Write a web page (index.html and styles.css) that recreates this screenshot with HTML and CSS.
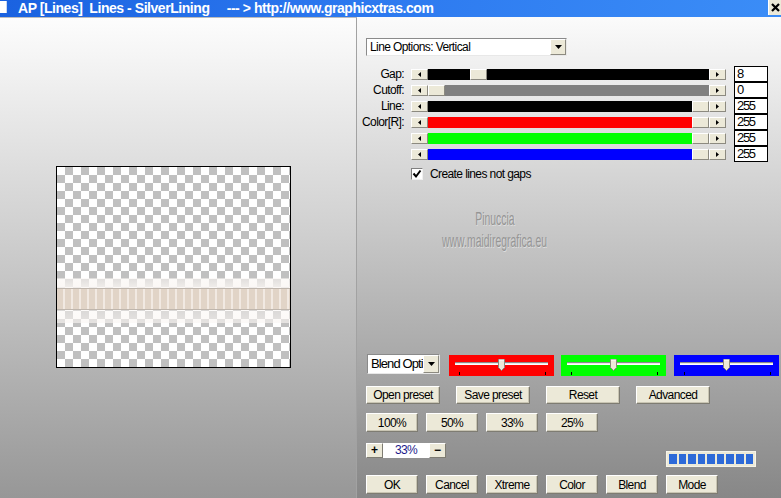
FILE: index.html
```html
<!DOCTYPE html>
<html>
<head>
<meta charset="utf-8">
<link rel="stylesheet" href="styles.css">
</head>
<body>
<div class="window">
  <div class="titlebar">
    <span class="app-icon"></span>
    <span class="title">AP [Lines]  Lines - SilverLining     --- &gt; http://www.graphicxtras.com</span>
    <span class="close"><svg width="9" height="9" viewBox="0 0 9 9"><path d="M1 1L8 8M8 1L1 8" stroke="#000" stroke-width="2.2"/></svg></span>
  </div>
  <div class="main">
    <div class="left">
      <div class="preview">
        <div class="band"><div class="band-top"></div><div class="stripes"></div><div class="band-bottom"></div></div>
      </div>
    </div>
    <div class="right">
      <div class="select select-wide">
        <span class="select-text">Line Options: Vertical</span>
        <span class="select-btn"><svg width="7" height="4" viewBox="0 0 7 4"><path d="M0 0H7L3.5 4Z" fill="#000"/></svg></span>
      </div>

      <div class="sliders">
        <span class="lbl">Gap:</span>
        <div class="scroll c-black">
          <span class="sbtn"><svg width="3" height="5" viewBox="0 0 3 5"><path d="M3 0V5L0 2.5Z" fill="#000"/></svg></span>
          <span class="track"><span class="fill" style="width:42px"></span><span class="thumb"></span><span class="rest"></span></span>
          <span class="sbtn"><svg width="3" height="5" viewBox="0 0 3 5"><path d="M0 0V5L3 2.5Z" fill="#000"/></svg></span>
        </div>
        <span class="val">8</span>

        <span class="lbl">Cutoff:</span>
        <div class="scroll c-gray">
          <span class="sbtn"><svg width="3" height="5" viewBox="0 0 3 5"><path d="M3 0V5L0 2.5Z" fill="#000"/></svg></span>
          <span class="track"><span class="fill" style="width:0px"></span><span class="thumb"></span><span class="rest"></span></span>
          <span class="sbtn"><svg width="3" height="5" viewBox="0 0 3 5"><path d="M0 0V5L3 2.5Z" fill="#000"/></svg></span>
        </div>
        <span class="val">0</span>

        <span class="lbl">Line:</span>
        <div class="scroll c-black">
          <span class="sbtn"><svg width="3" height="5" viewBox="0 0 3 5"><path d="M3 0V5L0 2.5Z" fill="#000"/></svg></span>
          <span class="track"><span class="fill" style="width:264px"></span><span class="thumb"></span><span class="rest"></span></span>
          <span class="sbtn"><svg width="3" height="5" viewBox="0 0 3 5"><path d="M0 0V5L3 2.5Z" fill="#000"/></svg></span>
        </div>
        <span class="val">255</span>

        <span class="lbl">Color[R]:</span>
        <div class="scroll c-red">
          <span class="sbtn"><svg width="3" height="5" viewBox="0 0 3 5"><path d="M3 0V5L0 2.5Z" fill="#000"/></svg></span>
          <span class="track"><span class="fill" style="width:264px"></span><span class="thumb"></span><span class="rest"></span></span>
          <span class="sbtn"><svg width="3" height="5" viewBox="0 0 3 5"><path d="M0 0V5L3 2.5Z" fill="#000"/></svg></span>
        </div>
        <span class="val">255</span>

        <span class="lbl"></span>
        <div class="scroll c-green">
          <span class="sbtn"><svg width="3" height="5" viewBox="0 0 3 5"><path d="M3 0V5L0 2.5Z" fill="#000"/></svg></span>
          <span class="track"><span class="fill" style="width:264px"></span><span class="thumb"></span><span class="rest"></span></span>
          <span class="sbtn"><svg width="3" height="5" viewBox="0 0 3 5"><path d="M0 0V5L3 2.5Z" fill="#000"/></svg></span>
        </div>
        <span class="val">255</span>

        <span class="lbl"></span>
        <div class="scroll c-blue">
          <span class="sbtn"><svg width="3" height="5" viewBox="0 0 3 5"><path d="M3 0V5L0 2.5Z" fill="#000"/></svg></span>
          <span class="track"><span class="fill" style="width:264px"></span><span class="thumb"></span><span class="rest"></span></span>
          <span class="sbtn"><svg width="3" height="5" viewBox="0 0 3 5"><path d="M0 0V5L3 2.5Z" fill="#000"/></svg></span>
        </div>
        <span class="val">255</span>
      </div>

      <div class="check">
        <span class="box"><svg width="10" height="10" viewBox="0 0 10 10"><path d="M1.5 4.5L4 7.5L8.5 1.5" stroke="#000" stroke-width="2" fill="none"/></svg></span>
        <span>Create lines not gaps</span>
      </div>

      <div class="wm">
        <span>Pinuccia</span>
        <span>www.maidiregrafica.eu</span>
      </div>

      <div class="blend-row">
        <div class="select select-blend">
          <span class="select-text">Blend Opti</span>
          <span class="select-btn"><svg width="7" height="4" viewBox="0 0 7 4"><path d="M0 0H7L3.5 4Z" fill="#000"/></svg></span>
        </div>
        <div class="cbox cb-red">
          <div class="groove"></div>
          <div class="ticks"><i></i><i></i></div>
          <svg class="cthumb" width="7" height="12" viewBox="0 0 7 12"><path d="M0.5 0.5H6.5V8.5L3.5 11.5L0.5 8.5Z" fill="#ece9d8" stroke="#8a887c"/><path d="M1 1H6" stroke="#fff"/></svg>
        </div>
        <div class="cbox cb-green">
          <div class="groove"></div>
          <div class="ticks"><i></i><i></i></div>
          <svg class="cthumb" width="7" height="12" viewBox="0 0 7 12"><path d="M0.5 0.5H6.5V8.5L3.5 11.5L0.5 8.5Z" fill="#ece9d8" stroke="#8a887c"/><path d="M1 1H6" stroke="#fff"/></svg>
        </div>
        <div class="cbox cb-blue">
          <div class="groove"></div>
          <div class="ticks"><i></i><i></i></div>
          <svg class="cthumb" width="7" height="12" viewBox="0 0 7 12"><path d="M0.5 0.5H6.5V8.5L3.5 11.5L0.5 8.5Z" fill="#ece9d8" stroke="#8a887c"/><path d="M1 1H6" stroke="#fff"/></svg>
        </div>
      </div>

      <div class="btn-row row1">
        <span class="btn w74">Open preset</span>
        <span class="btn w74">Save preset</span>
        <span class="btn w74">Reset</span>
        <span class="btn w74">Advanced</span>
      </div>

      <div class="btn-row row2">
        <span class="btn w52">100%</span>
        <span class="btn w52">50%</span>
        <span class="btn w52">33%</span>
        <span class="btn w52">25%</span>
      </div>

      <div class="zoom-row">
        <div class="zc">
          <span class="zbtn">+</span>
          <span class="zfield">33%</span>
          <span class="zbtn">−</span>
        </div>
        <div class="prog"><i></i><i></i><i></i><i></i><i></i><i></i><i></i><i></i><i></i></div>
      </div>

      <div class="btn-row row3">
        <span class="btn w52">OK</span>
        <span class="btn w52">Cancel</span>
        <span class="btn w52">Xtreme</span>
        <span class="btn w52">Color</span>
        <span class="btn w52">Blend</span>
        <span class="btn w52">Mode</span>
      </div>
    </div>
  </div>
</div>
</body>
</html>
```

FILE: styles.css
```css
* { box-sizing: border-box; }
html, body { margin: 0; padding: 0; }
body {
  width: 781px;
  height: 498px;
  overflow: hidden;
  font-family: "Liberation Sans", Arial, sans-serif;
  font-size: 12px;
  letter-spacing: -0.6px;
  color: #000;
  background: #fff;
}
.window { width: 781px; height: 498px; display: flex; flex-direction: column; }

/* title bar */
.titlebar {
  height: 17px;
  display: flex;
  align-items: flex-start;
  background: linear-gradient(to right, #1a62e0, #2a76ee 40%, #3b8df7);
  color: #fff;
  flex: none;
}
.app-icon { width: 7px; height: 12px; margin-top: 1px; background: #fff; border-right: 1px solid #c8d8f0; }
.title {
  margin-left: 11px;
  font-weight: bold;
  font-size: 14px;
  letter-spacing: -0.45px;
  line-height: 16px;
  white-space: pre;
}
.close {
  margin-left: auto;
  width: 13px;
  height: 15px;
  background: #ece9d8;
  border-left: 1px solid #fff;
  display: flex;
  align-items: center;
  justify-content: center;
}

.main { flex: 1; display: flex; min-height: 0; }

/* left preview panel */
.left {
  width: 357px;
  flex: none;
  border-top: 1px solid #bdbdbd;
  border-right: 1px solid #a2a2a2;
  background: linear-gradient(#fdfdfd, #979797);
  padding: 148px 0 0 56px;
}
.preview {
  width: 235px;
  height: 202px;
  border: 1px solid #000;
  background-color: #fff;
  background-image: conic-gradient(#c0c0c0 25%, #fff 0 50%, #c0c0c0 0 75%, #fff 0);
  background-size: 16px 16px;
  padding-top: 111px;
}
.band { height: 45px; }
.band-top {
  height: 10px;
  background: linear-gradient(rgba(250,246,243,0.55), rgba(250,246,243,0.85));
}
.stripes {
  height: 22px;
  border-top: 1px solid #bfb6ad;
  border-bottom: 1px solid #bfb6ad;
  background: repeating-linear-gradient(to right, #e1d4c7 0 6px, #f1e9e2 6px 8px);
}
.band-bottom {
  height: 13px;
  background: linear-gradient(rgba(250,246,243,0.45), rgba(250,246,243,0.65));
}

/* right control panel */
.right {
  flex: 1;
  background: linear-gradient(#fbfbfb, #878787);
  padding: 21px 0 0 9px;
  display: flex;
  flex-direction: column;
}

.select {
  display: flex;
  background: #fff;
  border: 1px solid;
  border-color: #8a8a8a #e8e8e8 #e8e8e8 #8a8a8a;
}
.select-wide { width: 201px; height: 18px; }
.select-text { flex: 1; padding-left: 3px; line-height: 16px; white-space: nowrap; overflow: hidden; }
.select-btn {
  width: 16px;
  height: 16px;
  flex: none;
  background: #ece9d8;
  border: 1px solid;
  border-color: #fff #8c8a80 #8c8a80 #fff;
  display: flex;
  align-items: center;
  justify-content: center;
}

.sliders {
  display: grid;
  grid-template-columns: 47px 315px 35px;
  grid-auto-rows: 16px;
  column-gap: 7px;
  align-items: center;
  margin: 10px 0 0 -9px;
}
.lbl { text-align: right; white-space: nowrap; }
.scroll { display: flex; height: 11px; }
.sbtn, .thumb {
  width: 17px;
  height: 11px;
  flex: none;
  background: #ece9d8;
  border: 1px solid;
  border-color: #fff #8c8a80 #8c8a80 #fff;
}
.sbtn { display: flex; align-items: center; justify-content: center; }
.track { flex: 1; display: flex; }
.fill { flex: none; }
.rest { flex: 1; }
.c-black .fill, .c-black .rest { background: #000; }
.c-gray .fill, .c-gray .rest { background: #808080; }
.c-red .fill, .c-red .rest { background: #f00; }
.c-green .fill, .c-green .rest { background: #0f0; }
.c-blue .fill, .c-blue .rest { background: #00f; }
.val {
  margin-left: 1px;
  height: 16px;
  border: 1px solid #000;
  background: #fff;
  font-size: 13px;
  letter-spacing: -1.3px;
  line-height: 13px;
  padding-left: 2px;
}

.check { display: flex; align-items: center; gap: 7px; margin: 5px 0 0 45px; height: 13px; }
.box {
  width: 12px;
  height: 12px;
  background: #fff;
  border: 1px solid;
  border-color: #808080 #f0f0f0 #f0f0f0 #808080;
  display: flex;
  align-items: center;
  justify-content: center;
}

.wm {
  margin: 28px 0 0 74px;
  width: 110px;
  display: flex;
  flex-direction: column;
  align-items: center;
  color: #959595;
  font-size: 19px;
  line-height: 22px;
  letter-spacing: 0;
  text-shadow: 1px 1px 0 #dedede;
}
.wm span { display: inline-block; white-space: nowrap; transform: scaleX(0.55); }

.blend-row { display: flex; align-items: flex-start; margin-top: 102px; }
.select-blend { width: 73px; height: 20px; margin-left: 1px; }
.select-blend .select-text { line-height: 18px; font-size: 13px; letter-spacing: -0.9px; overflow: hidden; }
.select-blend .select-btn { height: 18px; }
.cbox {
  width: 105px;
  height: 21px;
  margin-top: 1px;
  position: relative;
  padding: 7px 6px 0;
}
.cb-red { background: #f00; margin-left: 9px; }
.cb-green { background: #0f0; margin-left: 7px; }
.cb-blue { background: #00f; margin-left: 8px; }
.groove {
  height: 3px;
  background: #e6e6e6;
  border-top: 1px solid #8a8a8a;
  border-bottom: 1px solid #fff;
}
.ticks { display: flex; justify-content: space-between; padding: 0 2px 0 4px; margin-top: 7px; }
.ticks i { width: 1px; height: 3px; background: #000; }
.cthumb { position: absolute; left: 49px; top: 4px; }

.btn {
  display: flex;
  align-items: center;
  justify-content: center;
  background: #ece9d8;
  border: 1px solid;
  border-color: #fff #7e7c72 #7e7c72 #fff;
  box-shadow: inset -1px -1px 0 #c9c5b3;
  white-space: nowrap;
}
.btn-row { display: flex; }
.row1 { gap: 16px; margin-top: 10px; }
.row1 .btn { height: 18px; }
.w74 { width: 74px; }
.w52 { width: 52px; }
.row2 { gap: 8px; margin-top: 9px; }
.row2 .btn, .row3 .btn { height: 19px; }
.row3 { gap: 8px; margin-top: 8px; }

.zoom-row { display: flex; align-items: flex-start; margin-top: 11px; }
.zc { display: flex; height: 15px; }
.zbtn {
  width: 17px;
  height: 15px;
  background: #ece9d8;
  border: 1px solid;
  border-color: #fff #7e7c72 #7e7c72 #fff;
  font-weight: bold;
  font-size: 12px;
  line-height: 12px;
  letter-spacing: 0;
  text-align: center;
}
.zfield {
  width: 46px;
  height: 15px;
  background: #fff;
  color: #1c1c8c;
  text-align: center;
  line-height: 14px;
  font-size: 12px;
}
.prog {
  margin: 8px 0 0 220px;
  width: 90px;
  height: 16px;
  background: #ece9d8;
  border: 1px solid #f6f4ea;
  padding: 2px;
  display: flex;
  gap: 2px;
}
.prog i { flex: 1; background: #2d6ad8; }
```
